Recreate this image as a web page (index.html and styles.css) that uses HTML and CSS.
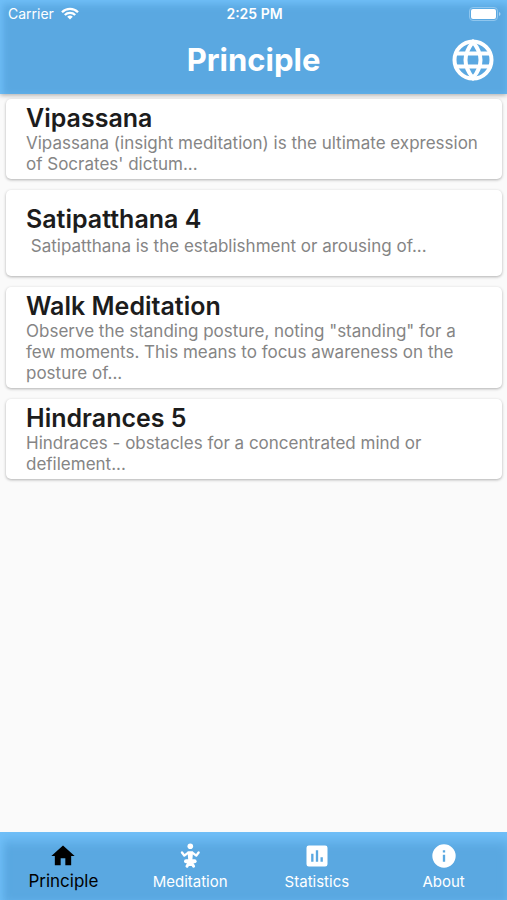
FILE: index.html
```html
<!DOCTYPE html>
<html lang="en">
<head>
<meta charset="utf-8">
<meta name="viewport" content="width=device-width, initial-scale=1">
<title>Principle</title>
<link rel="stylesheet" href="styles.css">
</head>
<body>
<header class="top">
  <div class="status">
    <div class="carrier">Carrier
      <svg width="18" height="13" viewBox="0 0 18 13" fill="none" stroke="currentColor" stroke-width="2.3"><path d="M1 5.2a11.3 11.3 0 0 1 16 0M3.8 8a7.4 7.4 0 0 1 10.4 0"/><path d="M9 12.6 6.2 9.8a4 4 0 0 1 5.6 0z" fill="currentColor" stroke="none"/></svg>
    </div>
    <div class="time">2:25 PM</div>
    <svg class="battery" width="32" height="14" viewBox="0 0 32 14"><rect x=".5" y=".5" width="28" height="13" rx="3.5" fill="none" stroke="#8fc6ee"/><rect x="2" y="2" width="25" height="10" rx="2" fill="#fff"/><path d="M30 5v4q1.500-.5 1.500-2T30 5z" fill="#a9d3f2"/></svg>
  </div>
  <div class="bar">
    <h1>Principle</h1>
    <button class="globe" aria-label="Language">
      <svg width="42" height="42" viewBox="0 0 42 42" fill="none" stroke="currentColor" stroke-width="4"><circle cx="21" cy="21" r="18.500"/><path d="M21 3q-7.500 9-7.500 18T21 39q7.500-9 7.500-18T21 3zM4 14.500h34M4 27.500h34"/></svg>
    </button>
  </div>
</header>
<main class="list">
  <article class="card">
    <h2>Vipassana</h2>
    <p>Vipassana (insight meditation) is the ultimate expression of Socrates' dictum...</p>
  </article>
  <article class="card roomy">
    <h2>Satipatthana 4</h2>
    <p>&nbsp;Satipatthana is the establishment or arousing of...</p>
  </article>
  <article class="card">
    <h2>Walk Meditation</h2>
    <p>Observe the standing posture, noting "standing" for a few moments. This means to focus awareness on the posture of...</p>
  </article>
  <article class="card">
    <h2>Hindrances 5</h2>
    <p>Hindraces - obstacles for a concentrated mind or defilement...</p>
  </article>
</main>
<nav class="tabs">
  <a class="tab active" href="#principle">
    <svg width="28" height="28" viewBox="0 0 24 24" fill="currentColor"><path d="M10 20v-6h4v6h5v-8h3L12 3 2 12h3v8z"/></svg>
    <span>Principle</span>
  </a>
  <a class="tab" href="#meditation">
    <svg width="28" height="28" viewBox="0 0 28 28" fill="none" stroke="currentColor" stroke-linecap="round" stroke-linejoin="round"><circle cx="14.300" cy="4.300" r="2.800" fill="currentColor" stroke="none"/><path d="M6 10.500 8.300 13.600l4-3h4l4 3 2.300-3.100" stroke-width="2.400"/><path d="M11.500 9.500h5.600l-.8 9h-4z" fill="currentColor" stroke="none"/><path d="M10 19.300h8.600" stroke-width="4"/><path d="M12.500 21.500l-1.500 2.800M16 21.500l1.600 2.800M12.500 22.500h3.600" stroke-width="3"/></svg>
    <span>Meditation</span>
  </a>
  <a class="tab" href="#statistics">
    <svg width="28" height="28" viewBox="0 0 24 24" fill="currentColor"><path d="M19 3H5a2 2 0 0 0-2 2v14a2 2 0 0 0 2 2h14a2 2 0 0 0 2-2V5a2 2 0 0 0-2-2zM9 17H7v-7h2v7zm4 0h-2V7h2v10zm4 0h-2v-4h2v4z"/></svg>
    <span>Statistics</span>
  </a>
  <a class="tab" href="#about">
    <svg width="28" height="28" viewBox="0 0 24 24" fill="currentColor"><path d="M12 2a10 10 0 1 0 0 20 10 10 0 0 0 0-20zm1 15h-2v-6h2v6zm0-8h-2V7h2v2z"/></svg>
    <span>About</span>
  </a>
</nav>
</body>
</html>
```
FILE: styles.css
```css
* { box-sizing: border-box; margin: 0; }
body {
  min-height: 100vh;
  display: flex;
  flex-direction: column;
  background: #fafafa;
  font-family: Inter, "Liberation Sans", sans-serif;
}
svg { display: block; flex: none; }
.top {
  background: #5aa8e1;
  color: #fff;
  box-shadow: inset 0 6px 8px -2px #70bff8, inset 5px 0 8px -3px #70bff8, 0 1px 5px rgba(0, 0, 0, .35);
}
.status {
  display: grid;
  grid-template-columns: 1fr auto 1fr;
  align-items: center;
  height: 27px;
  padding: 0 6px 0 8px;
  font-size: 14px;
}
.carrier { display: flex; align-items: center; gap: 7px; }
.time { font-size: 14px; font-weight: 600; }
.battery { justify-self: end; }
.bar {
  display: grid;
  grid-template-columns: 1fr auto 1fr;
  align-items: center;
  height: 67px;
  padding: 0 13px 2px;
}
.bar h1 { grid-column: 2; font-size: 31px; line-height: 36px; font-weight: 700; }
.globe {
  justify-self: end;
  padding: 0;
  border: 0;
  background: none;
  color: #fff;
}
.list {
  flex: 1;
  display: flex;
  flex-direction: column;
  gap: 11px;
  padding: 5px 5px 0 6px;
}
.card {
  padding: 5px 20px 4px;
  border-radius: 5px;
  background: #fff;
  box-shadow: 0 1px 3px rgba(0, 0, 0, .3);
}
.card h2 { color: #1c1c1c; font-size: 25px; line-height: 29px; font-weight: 600; }
.card p { color: #858585; font-size: 17px; line-height: 21px; }
.roomy { padding: 15px 20px 19px; }
.roomy h2 { margin-bottom: 2px; }
.tabs {
  display: grid;
  grid-template-columns: repeat(4, 1fr);
  height: 68px;
  background: #5aa8e1;
  box-shadow: inset 0 12px 12px -3px #70bff8, inset 6px 0 10px -4px #70bff8;
}
.tab {
  display: flex;
  flex-direction: column;
  align-items: center;
  padding-top: 10px;
  color: #fff;
  font-size: 15px;
  line-height: 24px;
  text-decoration: none;
}
.active { color: #000; font-size: 17px; line-height: 22px; }
```
